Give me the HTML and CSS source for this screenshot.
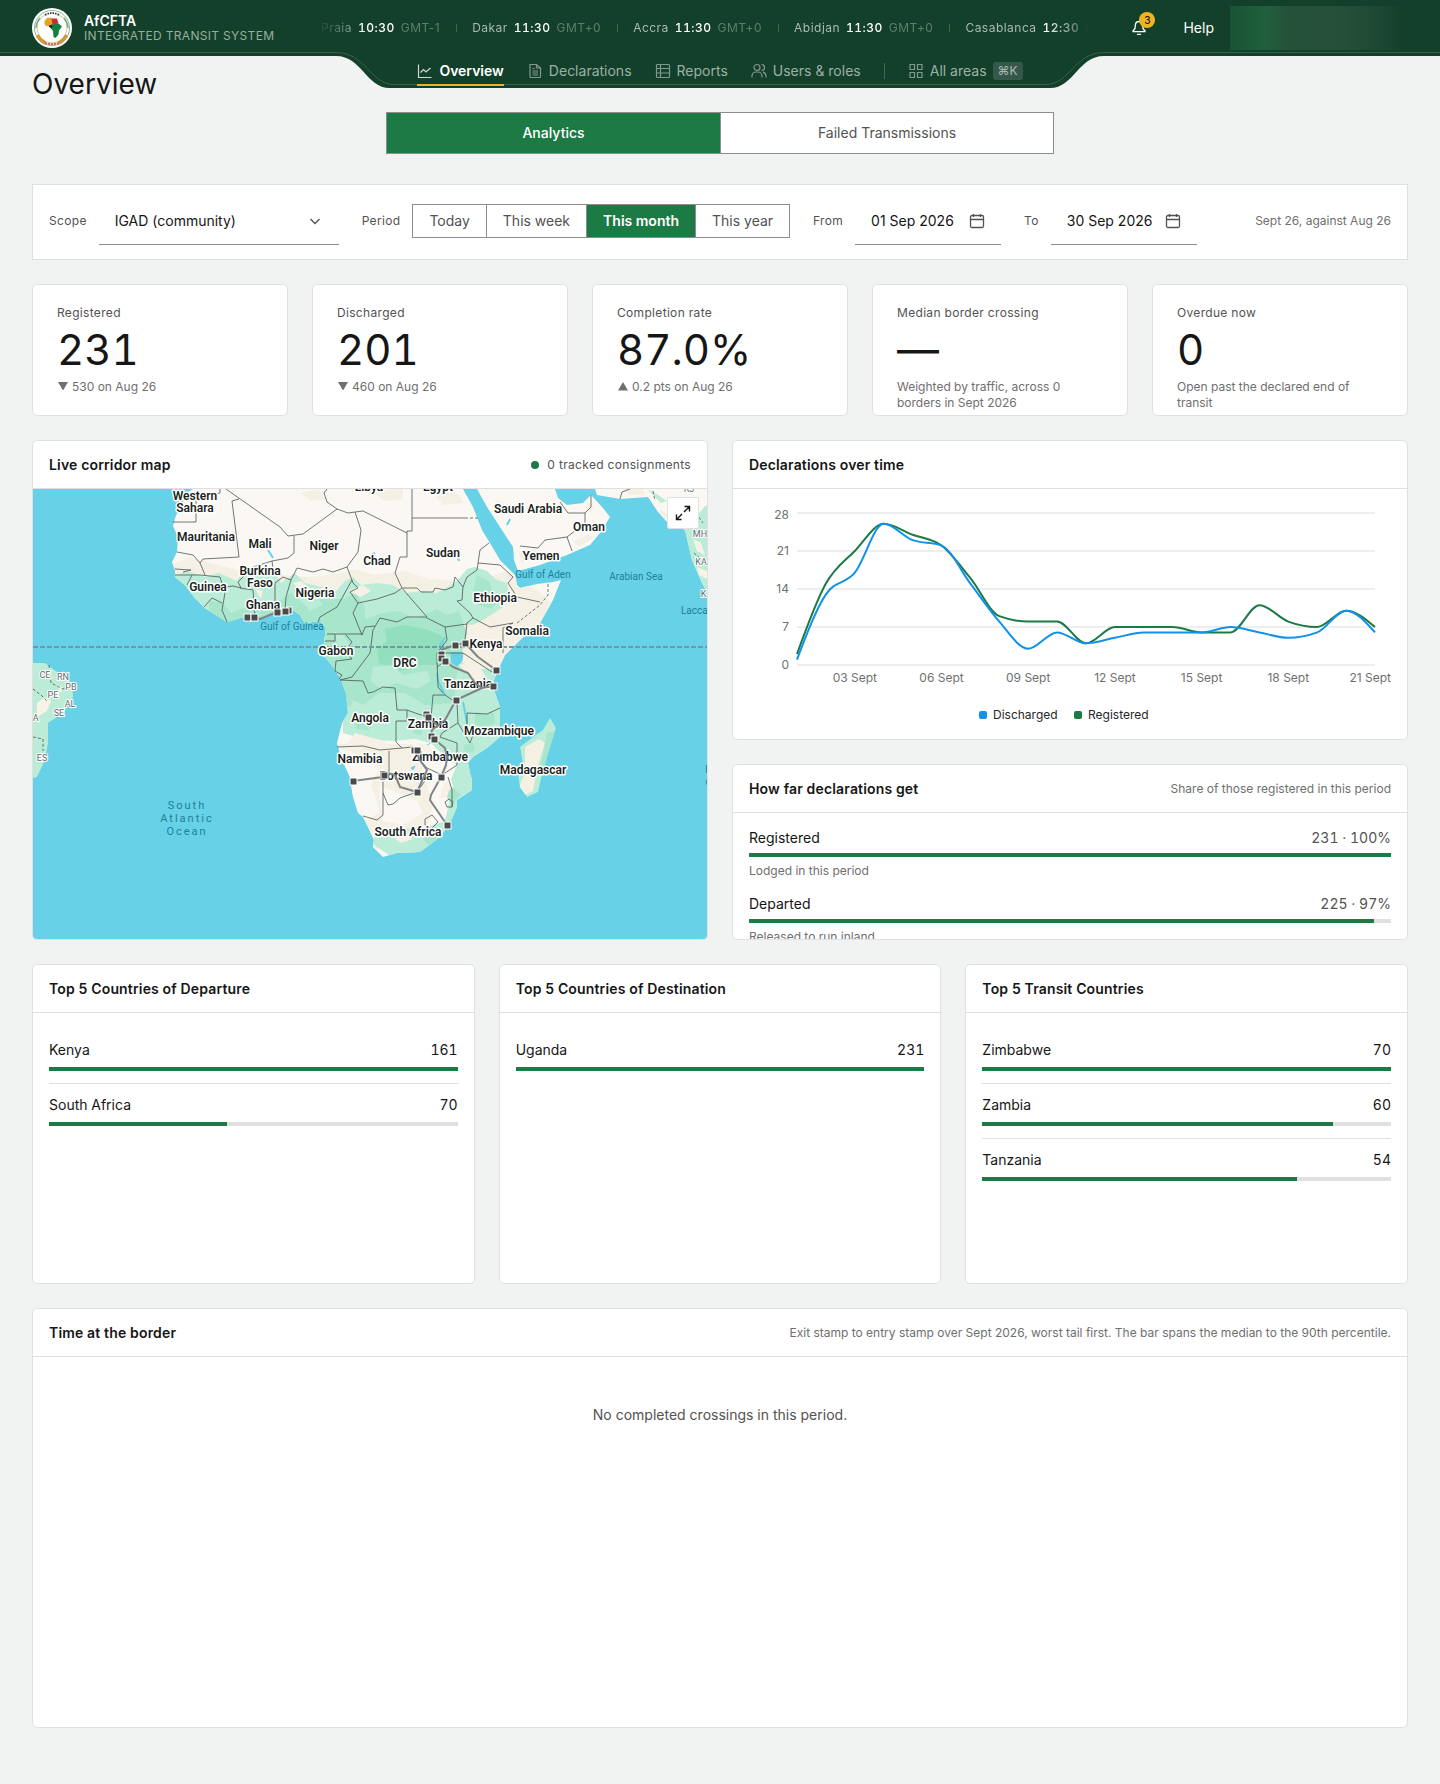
FILE: index.html
```html
<!DOCTYPE html>
<html lang="en">
<head>
<meta charset="utf-8">
<meta name="viewport" content="width=device-width, initial-scale=1">
<title>Overview – AfCFTA Integrated Transit System</title>
<link rel="stylesheet" href="styles.css">
</head>
<body>
<header class="topbar">
  <a class="brand" href="#">
    <svg class="brand-logo" viewBox="0 0 40 40" aria-hidden="true">
      <circle cx="20" cy="20" r="20" fill="#fff"/>
      <circle cx="20" cy="20" r="17.500" fill="none" stroke="#7fb69a" stroke-width="1"/>
      <circle cx="20" cy="20" r="15" fill="none" stroke="#d9c48f" stroke-width="1"/>
      <path d="M5.500 27a16 16 0 0 0 8 8M34.500 27a16 16 0 0 1-8 8" fill="none" stroke="#cf9a35" stroke-width="3.500"/>
      <path d="M4 20a16 16 0 0 1 4-10M36 20a16 16 0 0 0-4-10" fill="none" stroke="#5aa77e" stroke-width="1.200"/>
      <path d="M13 7.500q7-4 14 0" fill="none" stroke="#fff" stroke-width="5"/>
      <path d="M13 7q7-4 14 0" fill="none" stroke="#444" stroke-width="2" stroke-dasharray="1.600 1"/>
      <path d="M13 35q7 2 14 0" fill="none" stroke="#e2604e" stroke-width="2" stroke-dasharray="2 1"/>
      <path d="M12.500 13l2.500-3 4-.5 1 6-2 3-4-.5-1.500-2z" fill="#e0a526"/>
      <path d="M19 10.500l6 0 1.500 5-6 1z" fill="#d12c2c"/>
      <path d="M16.500 18l4-2 1 4-2 1z" fill="#222"/>
      <path d="M21 16l5.500-.5 3.500 3-3 4-.5 4-3 3.500-2-1-.5-6-1.500-2z" fill="#12813f"/>
    </svg>
    <span class="brand-text">
      <strong class="brand-name">AfCFTA</strong>
      <span class="brand-sub">INTEGRATED TRANSIT SYSTEM</span>
    </span>
  </a>
  <div class="ticker" aria-label="World clocks">
    <span class="clock">Praia <b>10:30</b> <i>GMT-1</i></span>
    <span class="clock">Dakar <b>11:30</b> <i>GMT+0</i></span>
    <span class="clock">Accra <b>11:30</b> <i>GMT+0</i></span>
    <span class="clock">Abidjan <b>11:30</b> <i>GMT+0</i></span>
    <span class="clock">Casablanca <b>12:30</b> <i>GMT+1</i></span>
  </div>
  <div class="topbar-actions">
    <button class="bell" type="button" aria-label="Notifications, 3 unread">
      <svg viewBox="0 0 16 16" width="16" height="16" fill="none" stroke="currentColor" stroke-width="1.300" stroke-linejoin="round" stroke-linecap="round"><path d="M8 1.500C5.800 1.500 4.500 3.200 4.300 5.200L4 8.500 2 11v.7h12V11l-2-2.500-.3-3.300C11.500 3.200 10.200 1.500 8 1.500z"/><path d="M6.500 14.300h3"/></svg>
      <span class="badge">3</span>
    </button>
    <a class="help" href="#">Help</a>
    <button class="account" type="button" aria-label="Account"></button>
  </div>
  <div class="notch">
    <svg class="notch-shape" viewBox="0 0 768 36" preserveAspectRatio="none" aria-hidden="true">
      <path d="M0 0V4C26 4 30 36 54 36H714C738 36 742 4 768 4V0z" fill="#13402a"/>
      <path d="M0 .5C30 .5 34 32.500 58 32.500H710C734 32.500 738 .5 768 .5" fill="none" stroke="#3a5f4b"/>
    </svg>
    <nav class="nav" aria-label="Main">
      <a class="nav-link is-active" href="#" aria-current="page"><svg viewBox="0 0 16 16"><path d="M1.500 1.500v13h13M3.500 9.500l3-3 2.500 2.500 4.500-4"/></svg>Overview</a>
      <a class="nav-link" href="#"><svg viewBox="0 0 16 16"><path d="M3 1.500h6.500L13.500 5v8.500a1 1 0 0 1-1 1h-8.500a1 1 0 0 1-1-1zM9.500 1.500V5h4M5.500 8h5.500M5.500 10h5.500M5.500 12h5.500M5.500 5.500h2"/></svg>Declarations</a>
      <a class="nav-link" href="#"><svg viewBox="0 0 16 16"><path d="M2.500 1.500h11a1 1 0 0 1 1 1v11a1 1 0 0 1-1 1h-11a1 1 0 0 1-1-1v-11a1 1 0 0 1 1-1zM1.500 5.500h13M5.500 1.500v13M1.500 10h13"/></svg>Reports</a>
      <a class="nav-link" href="#"><svg viewBox="0 0 16 16"><circle cx="6" cy="4.500" r="3"/><path d="M1 14.500V13a4 4 0 0 1 4-4h2a4 4 0 0 1 4 4v1.500M10.500 1.500a3 3 0 0 1 0 6M12 9.200a4 4 0 0 1 3 3.800v1.500"/></svg>Users &amp; roles</a>
      <span class="nav-rule"></span>
      <button class="nav-link" type="button"><svg viewBox="0 0 16 16"><path d="M2 1.500h4.500V6.500H2zM9.500 1.500H14V6.500H9.500zM2 9.500h4.500v5H2zM9.500 9.500H14v5H9.500z"/></svg>All areas <kbd>⌘K</kbd></button>
    </nav>
  </div>
</header>

<main class="page">
  <h1 class="page-title">Overview</h1>
  <div class="view-tabs" role="tablist">
    <button class="view-tab is-active" type="button" role="tab" aria-selected="true">Analytics</button>
    <button class="view-tab" type="button" role="tab" aria-selected="false">Failed Transmissions</button>
  </div>

  <form class="filters">
    <div class="filter">
      <label for="scope">Scope</label>
      <div class="field field-select">
        <select id="scope"><option>IGAD (community)</option></select>
        <svg class="chevron" viewBox="0 0 16 16" width="16" height="16"><path d="M3.500 6L8 10.500 12.500 6" fill="none" stroke="#525252" stroke-width="1.400"/></svg>
      </div>
    </div>
    <div class="filter">
      <span id="period-label">Period</span>
      <div class="segments" role="group" aria-labelledby="period-label">
        <button type="button">Today</button>
        <button type="button">This week</button>
        <button type="button" class="is-active" aria-pressed="true">This month</button>
        <button type="button">This year</button>
      </div>
    </div>
    <div class="filter">
      <label for="from">From</label>
      <div class="field"><input id="from" type="text" value="01 Sep 2026">
        <svg viewBox="0 0 16 16" width="16" height="16" fill="none" stroke="#525252" stroke-width="1.300"><rect x="1.500" y="2.500" width="13" height="12" rx="1.500"/><path d="M1.500 6.500h13M4.500 1v3M11.500 1v3"/></svg></div>
    </div>
    <div class="filter">
      <label for="to">To</label>
      <div class="field"><input id="to" type="text" value="30 Sep 2026">
        <svg viewBox="0 0 16 16" width="16" height="16" fill="none" stroke="#525252" stroke-width="1.300"><rect x="1.500" y="2.500" width="13" height="12" rx="1.500"/><path d="M1.500 6.500h13M4.500 1v3M11.500 1v3"/></svg></div>
    </div>
    <p class="filters-note">Sept 26, against Aug 26</p>
  </form>

  <section class="kpis" aria-label="Key figures">
    <article class="card kpi"><h2>Registered</h2><p class="kpi-value">231</p><p class="kpi-note"><svg viewBox="0 0 10 10"><path d="M0 1h10L5 9.500z"/></svg>530 on Aug 26</p></article>
    <article class="card kpi"><h2>Discharged</h2><p class="kpi-value">201</p><p class="kpi-note"><svg viewBox="0 0 10 10"><path d="M0 1h10L5 9.500z"/></svg>460 on Aug 26</p></article>
    <article class="card kpi"><h2>Completion rate</h2><p class="kpi-value">87.0%</p><p class="kpi-note"><svg viewBox="0 0 10 10"><path d="M0 9.500h10L5 1z"/></svg>0.2 pts on Aug 26</p></article>
    <article class="card kpi"><h2>Median border crossing</h2><p class="kpi-value">—</p><p class="kpi-note">Weighted by traffic, across 0 borders in Sept 2026</p></article>
    <article class="card kpi"><h2>Overdue now</h2><p class="kpi-value">0</p><p class="kpi-note">Open past the declared end of transit</p></article>
  </section>

  <section class="middle">
    <article class="card map-card">
      <header class="card-head"><h2>Live corridor map</h2><p class="tracked">0 tracked consignments</p></header>
      <div class="map">
        <svg class="map-svg" viewBox="0 0 674 450" preserveAspectRatio="xMidYMid slice" role="img" aria-label="Corridor map of Africa">
          <defs>
            <path id="africa" d="M160 0L155 3 148 16 142 29 140 37 145 48 144 63 139 73 142 81 142 88 152 96 161 108 172 119 183 126 194 133 210 128 227 130 244 124 260 121 267 126 272 134 287 132 293 139 291 154 289 164 300 178 308 191 313 204 315 224 309 234 304 254 309 271 317 288 320 308 325 324 330 328 335 338 341 351 340 358 350 368 364 364 387 363 407 348 417 334 424 318 424 311 439 301 439 291 437 284 435 274 440 268 454 259 467 248 467 218 462 204 460 194 464 183 472 166 487 151 507 134 520 111 528 91 520 93 504 95 487 99 484 96 482 86 467 71 457 54 449 41 440 18 430 0z"/>
            <path id="madagascar" d="M517 229L523 239 519 251 510 281 505 303 494 308 487 298 485 284 490 274 487 258 500 248 510 241z"/>
            <clipPath id="africa-clip"><use href="#africa"/></clipPath>
            <clipPath id="madagascar-clip"><use href="#madagascar"/></clipPath>
          </defs>
          <rect width="674" height="450" fill="#67d1e7"/>
          <use href="#africa" fill="#fbf8f4"/>
          <g clip-path="url(#africa-clip)">
            <path fill="#f5f0e4" d="M138 76l20-8 20 6 30 8 20-4 20 8 30 2 30-4 14-4 20 6 30-4 24 8 30 2 20-4 16-2 14-4 10 10 20 10 20 20-30 40-40 20H330l-190-40zM300 255h80l20 60-8 30-50 16-16-24 20-18-8-24 8-16-20-10zM268 4l18-4 6 10-14 2zM400 4l24 0 8 10-22 2zM340 4l30-6v12l-18 2z"/>
            <path fill="#fbf8f4" d="M346 296l24 10 14 6 6 12-20 12-20-4zM306 262l12 0 18 30 10 32-12 6-18-30z"/>
            <path fill="#bbecd7" d="M138 88l16-6 18 6 14-4 18 8 8-14 14 8 14-4 8 12 14-10 10 10 16 4 12 8 12-14 8-4 8 8 16-2 16 2 14 8 16-2 14 2 14-8 6-4 10-12 8-2 12 4 8 8 12 4 2 14-6 10-18 12-12 6-10-2-4 18-4 14 8 8 14 6 8 0 20 0V280l-30 30 2 30-22 30-60 0-30-20 16-2 16-8 30-2 18-6 4-18 6-10-4-14 6-14-12-8-14-14-16-4-24 2-28-2-20-6V190L260 160 190 136z"/>
            <path fill="#a7e6cb" d="M176 112l14 2 8 10 20-8 20 2 20-14 14 12 14-6 24 0 12-6 10 14 0 12 18-6 16-2 16 8 22-10 10 6 12-4 8 22-8 30-4 20 0 20-30 2-20-12-26 0-16 12-22-10-16-30 0-14-20-6-20-6-20 2-30 6-26-10z"/>
            <path fill="#92dfbe" d="M352 140l20-4 20 4 16 6 4 10-8 20-16 0-20 6-22-8-2-14 10-8z"/>
            <path fill="#bbecd7" d="M340 178l20-2 10 10 24-4 4 10-14 8-20-6-16 6-10-8zM300 142l10 4 8 12-10 6zM380 120l8 4-6 4zM336 112l20-6 8 4-14 8zM270 112l14-4 6 8-14 6z"/>
            <path fill="#a7e6cb" d="M444 86l12 6 4 12 8 6-10 10-12-4-6-14zM320 226l14 4 2 12-12-2zM380 232l12 4-4 10-8-2zM442 222l10 4 8-4 2 12-12 6-8-6zM430 256l10-2 2 8-10 2zM412 304l8-6 8 8-10 10zM390 350l14-10 6 6-14 12zM300 200l12 4 8 10-6 6z"/>
            <path fill="#f6f0e5" d="M436 136l14 0 20 6 2 14-8 18-10-4-8-8-10-8zM426 176l8-2 14 6 6 10-10 2-8-6zM322 244l14 4 16 4 8 8-50 0zM384 254l12 2 8 12-8 4-10-8zM412 292l6 4-4 12-8 2zM260 94l8-2 10 8-6 6zM222 100l8 2-2 8zM358 346l14-2 8 6-12 4zM316 102l14-6 8 6-10 6z"/>
          </g>
          <path fill="#fbf8f4" d="M444 0L454 18 467 38 480 58 481 71 485 82 507 76 534 66 557 56 567 44 577 28 570 19 558 6 550 14 534 16 525 9 522 0zM562 0l2 6 23 4 28-2 10 15 9 10 18 8 7 30 10 23 5 9V0z"/>
          <path fill="#f5f0e4" d="M486 62l16-2 6 8-20 6zM540 52l14-6 8 2-16 10zM462 10l8 4 2 10-8-6zM590 0l20 0 2 6-16 0zM626 20l10 6-4 4zM555 12l5 6-2 6-5-4zM486 102l10 2 8 14-14 12-6 0z"/>
          <path fill="#bbecd7" d="M652 41l20-24 2 0V103l-5-9-10-23zM614 0l8 4 12 8-6 2z"/>
          <path fill="#f7f3e6" d="M660 50l8 4 4 12-8-4zM664 78l10 4v8l-8-4zM658 8l8 2-4 6z"/>
          <path fill="#bbecd7" d="M0 174H12L24 183 39 194 40 208 30 224 15 234 15 254 12 271 4 288 0 289z"/>
          <path fill="#f7f3e6" d="M4 214l8-6 6 4-4 10-10 6zM24 196l6 2-2 6z"/>
          <use href="#madagascar" fill="#bbecd7"/>
          <g clip-path="url(#madagascar-clip)"><path fill="#f4f1e2" d="M492 258l14-8 6 4-8 26-4 22-8 4-6-8 6-14z"/><path fill="#a7e6cb" d="M514 244l8-2-8 34-4 10-3-6z"/></g>
          <g class="waters">
            <path d="M404 184l1 8 4 8 3 6M430 213l2 10 2 11M412 148l-6 10M342 64l-4 2M235 61l5 8M457 33l-4 6M424 64l2 8M474 36l3-6"/>
            <path d="M418 164h12l-1 8-5 5-5-3zM378 279l4-2-2 4zM394 256l8-4" class="lake"/>
          </g>
          <g class="borders">
            <path d="M187 0V4L163 10V33H140M206 10L199 12 206 68 170 70 167 74 160 66 144 63M193 0L247 38 255 47 270 45 304 20 294 13 291 4 294 0M261 47V64L255 69 239 72 220 78 208 90 205 93 208 99 200 97 192 98M304 20L315 24 322 23 330 22 374 44M379 0V42H374V68H367L362 84 369 99M379 29H432M322 23L328 41 325 63 314 78 320 94 325 99M258 91L264 79 280 83 290 80 300 83 314 78M319 91L304 118 287 128 285 133M252 121L253 108 258 91M242 121V94L250 88 258 91M239 72L240 80 249 87M222 128L220 101 207 99"/>
            <path d="M194 133L189 121 192 104 187 88 167 86 142 86M167 74L172 86M171 118L179 109 189 114M154 96L159 86M142 80L158 81 150 83M325 99L317 103 325 114 344 110 362 104 369 99M325 114L320 124 329 146M294 145H329M329 146L332 138 342 137M347 129L340 141 337 164 319 188 307 191M347 129L364 133 374 128 392 128 412 138M369 99L380 112 394 128M370 99L384 99 388 103 400 103 402 99 412 101 420 98 422 88 430 98 429 111 424 112 437 124 440 129 457 138 480 134M430 98L434 88 444 81 447 61 456 54M445 74L467 76 480 88 475 94 484 108 507 113M480 134L470 139V164M432 151L434 134 440 129M412 138L434 135M412 138L414 151 404 164 404 171 405 198 410 204M412 164H430L459 183M404 178L412 172"/>
            <path d="M292 152H302V145M313 146L319 153 312 162 319 170 303 172 302 182 309 186 306 190M307 191L330 192 335 204 340 203 350 198 362 199 364 221H374V232H363V253L369 259M374 221L385 225 398 229 400 206 412 206 424 214 425 234 409 244 407 248 424 254V276L409 286 394 279 380 263M304 258L330 257 347 261 380 258M356 262V283L350 284V326L344 331 330 327M350 304L355 316 360 315 367 309 384 303 394 289 400 286M434 224L454 225 467 219M425 234L437 254 440 246 434 238 434 224M415 288L419 301 419 318M416 310l4 3-1 5-5 0-2-5zM392 330l7-4 6 7-7 7-6-4zM487 57L505 59 512 51 534 48 552 34V24H535L527 13M534 48L539 62M558 6V18L552 24M587 10L589 3 597 0"/>
            <path d="M432 29H447M484 134L507 116 515 106V94M620 2L622 12M0 200L8 206 14 212M16 176L18 194 30 200 40 198M0 248L10 250 10 262M660 20L670 34M661 64L668 70" stroke-dasharray="3 2"/>
          </g>
          <path d="M0 158H674" stroke="#7497a5" stroke-width="2" stroke-dasharray="5 2"/>
          <g class="place">
            <text x="162" y="11">Western</text><text x="162" y="23">Sahara</text><text x="173" y="52">Mauritania</text><text x="227" y="59">Mali</text><text x="291" y="61">Niger</text><text x="336" y="2">Libya</text><text x="405" y="2">Egypt</text><text x="495" y="24">Saudi Arabia</text><text x="556" y="42">Oman</text><text x="508" y="71">Yemen</text><text x="410" y="68">Sudan</text><text x="344" y="76">Chad</text><text x="462" y="113">Ethiopia</text><text x="494" y="146">Somalia</text><text x="453" y="159">Kenya</text><text x="435" y="199">Tanzania</text><text x="372" y="178">DRC</text><text x="303" y="166">Gabon</text><text x="337" y="233">Angola</text><text x="395" y="239">Zambia</text><text x="466" y="246">Mozambique</text><text x="407" y="272">Zimbabwe</text><text x="373" y="291">Botswana</text><text x="327" y="274">Namibia</text><text x="500" y="285">Madagascar</text><text x="375" y="347">South Africa</text><text x="175" y="102">Guinea</text><text x="227" y="86">Burkina</text><text x="227" y="98">Faso</text><text x="230" y="120">Ghana</text><text x="282" y="108">Nigeria</text>
          </g>
          <g class="sea">
            <text x="259" y="141">Gulf of Guinea</text><text x="510" y="89">Gulf of Aden</text><text x="603" y="91">Arabian Sea</text><text x="680" y="125">Laccadive Sea</text>
          </g>
          <g class="ocean"><text x="154" y="320">South</text><text x="154" y="333">Atlantic</text><text x="154" y="346">Ocean</text><text x="693" y="284">Indian</text><text x="693" y="297">Ocean</text></g>
          <g class="state">
            <text x="12" y="189">CE</text><text x="30" y="191">RN</text><text x="38" y="201">PB</text><text x="20" y="209">PE</text><text x="37" y="218">AL</text><text x="26" y="227">SE</text><text x="0" y="232">BA</text><text x="9" y="272">ES</text><text x="656" y="3">RJ</text><text x="667" y="48">MH</text><text x="668" y="76">KA</text><text x="673" y="108">KL</text>
          </g>
          <path class="routes" d="M221 128L227 130 244 123 257 121M422 156L432 154 445 168 463 181M408 161L422 156M412 172L420 178 435 184 442 194 449 199 460 197M423 211L449 199M423 211L412 231 399 241 398 247 401 250 412 259 414 268 413 276 408 288 398 306 397 311 414 336M395 228L404 236M320 292L350 288 355 284 362 286 367 298 384 303 394 281 386 270 384 261"/>
          <g class="stops">
            <rect x="211" y="125" width="7" height="7"/><rect x="218" y="125" width="7" height="7"/><rect x="254" y="118" width="5" height="7"/><rect x="249" y="119" width="7" height="7"/><rect x="241" y="120" width="7" height="7"/><rect x="419" y="153" width="7" height="7"/><rect x="429" y="151" width="7" height="7"/><rect x="460" y="178" width="7" height="7"/><rect x="457" y="194" width="7" height="7"/><rect x="405" y="162" width="7" height="7"/><rect x="405" y="166" width="7" height="7"/><rect x="409" y="169" width="7" height="7"/><rect x="420" y="208" width="7" height="7"/><rect x="390" y="222" width="7" height="7"/><rect x="392" y="225" width="7" height="7"/><rect x="395" y="244" width="7" height="7"/><rect x="398" y="247" width="7" height="7"/><rect x="378" y="258" width="7" height="7"/><rect x="381" y="258" width="7" height="7"/><rect x="405" y="285" width="7" height="7"/><rect x="381" y="300" width="7" height="7"/><rect x="317" y="289" width="7" height="7"/><rect x="348" y="283" width="7" height="7"/><rect x="411" y="333" width="7" height="7"/>
          </g>
        </svg>
        <button class="map-expand" type="button" aria-label="Expand map"><svg viewBox="0 0 16 16" width="16" height="16"><path d="M9.500 1.500h5v5M6.500 14.500h-5v-5M14.500 1.500L9 7M1.500 14.500L7 9" fill="none" stroke="#161616" stroke-width="1.400"/></svg></button>
      </div>
    </article>

    <article class="card">
      <header class="card-head"><h2>Declarations over time</h2></header>
      <svg class="chart" id="chart" viewBox="0 0 674 250" role="img" aria-label="Discharged and registered declarations per day"></svg>
    </article>

    <article class="card funnel-card">
      <header class="card-head"><h2>How far declarations get</h2><p>Share of those registered in this period</p></header>
      <ul class="funnel">
        <li><div class="row"><span>Registered</span><span class="share">231 · 100%</span></div><div class="bar"><div style="width:100%"></div></div><p>Lodged in this period</p></li>
        <li><div class="row"><span>Departed</span><span class="share">225 · 97%</span></div><div class="bar"><div style="width:97.4%"></div></div><p>Released to run inland</p></li>
      </ul>
    </article>
  </section>

  <section class="rankings">
    <article class="card ranking">
      <header class="card-head"><h2>Top 5 Countries of Departure</h2></header>
      <ul class="rank-list">
        <li><div class="row"><span>Kenya</span><span>161</span></div><div class="bar"><div style="width:100%"></div></div></li>
        <li><div class="row"><span>South Africa</span><span>70</span></div><div class="bar"><div style="width:43.5%"></div></div></li>
      </ul>
    </article>
    <article class="card ranking">
      <header class="card-head"><h2>Top 5 Countries of Destination</h2></header>
      <ul class="rank-list">
        <li><div class="row"><span>Uganda</span><span>231</span></div><div class="bar"><div style="width:100%"></div></div></li>
      </ul>
    </article>
    <article class="card ranking">
      <header class="card-head"><h2>Top 5 Transit Countries</h2></header>
      <ul class="rank-list">
        <li><div class="row"><span>Zimbabwe</span><span>70</span></div><div class="bar"><div style="width:100%"></div></div></li>
        <li><div class="row"><span>Zambia</span><span>60</span></div><div class="bar"><div style="width:85.7%"></div></div></li>
        <li><div class="row"><span>Tanzania</span><span>54</span></div><div class="bar"><div style="width:77.1%"></div></div></li>
      </ul>
    </article>
  </section>

  <section class="card border-time">
    <header class="card-head"><h2>Time at the border</h2><p>Exit stamp to entry stamp over Sept 2026, worst tail first. The bar spans the median to the 90th percentile.</p></header>
    <p class="empty">No completed crossings in this period.</p>
  </section>
</main>
<script src="chart.js"></script>
</body>
</html>
```

FILE: styles.css
```css
*, *::before, *::after { box-sizing: border-box; }

:root {
  --green: #1c7a45;
  --forest: #13402a;
  --ink: #161616;
  --ink-2: #525252;
  --ink-3: #6f6f6f;
  --line: #e0e0e0;
  --line-strong: #8d8d8d;
  --page: #f1f3f2;
}

body {
  margin: 0;
  background: var(--page);
  color: var(--ink);
  font: 14px/18px Inter, "Liberation Sans", sans-serif;
}

h1, h2, p, ul { margin: 0; padding: 0; }
ul { list-style: none; }
a { color: inherit; text-decoration: none; }
button, input, select { font: inherit; color: inherit; border: 0; background: none; padding: 0; margin: 0; }

/* Top bar */
.topbar {
  position: relative;
  display: flex;
  align-items: center;
  height: 56px;
  padding: 0 32px;
  background: var(--forest);
  color: #fff;
}
.topbar::after {
  content: "";
  position: absolute;
  inset: 52px 0 auto;
  height: 1px;
  background: #3a5f4b;
}
.brand { display: flex; align-items: center; gap: 12px; width: 284px; }
.brand-logo { width: 40px; height: 40px; flex: none; }
.brand-text { display: flex; flex-direction: column; }
.brand-name { font-weight: 600; line-height: 16px; }
.brand-sub { font-size: 12px; line-height: 14px; letter-spacing: 0.32px; color: #9aae9f; white-space: nowrap; }

.ticker {
  display: flex;
  flex: 1;
  height: 52px;
  align-items: center;
  overflow: hidden;
  font-size: 12px;
  letter-spacing: 0.48px;
  color: #a9bab0;
  -webkit-mask-image: linear-gradient(90deg, transparent, #000 48px, #000 calc(100% - 48px), transparent);
  mask-image: linear-gradient(90deg, transparent, #000 48px, #000 calc(100% - 48px), transparent);
}
.clock { display: flex; gap: 6px; flex: none; padding: 0 16px; position: relative; }
.clock:first-child { padding-left: 5px; }
.clock + .clock::before { content: ""; position: absolute; left: 0; top: 5px; width: 1px; height: 8px; background: #42654f; }
.clock b { font-weight: 500; color: #fff; font-variant-numeric: tabular-nums; }
.clock i { font-style: normal; color: #5f7d6c; }

.topbar-actions { display: flex; align-items: center; margin-left: 38px; height: 56px; }
.bell { position: relative; display: flex; width: 16px; height: 16px; color: #fff; }
.badge {
  position: absolute; left: 8px; top: -8px;
  width: 16px; height: 16px; border-radius: 8px;
  background: #f0b323; color: #161616; font-size: 10px; font-weight: 500; line-height: 16px; text-align: center;
}
.help { margin-left: 36px; }
.account {
  width: 174px; height: 44px; margin: 0 4px 0 16px;
  background: linear-gradient(90deg, #195434, #205f3c 20%, #25503a 36%, #27503b 60%, #214a36 80%, var(--forest));
}

.notch { position: absolute; top: 52px; left: calc(50% - 384px); width: 768px; height: 36px; z-index: 2; }
.notch-shape { position: absolute; inset: 0; width: 100%; height: 100%; }
.nav { position: relative; display: flex; align-items: center; justify-content: center; gap: 23px; height: 34px; color: #9db0a4; }
.nav-link { display: flex; align-items: center; gap: 6px; height: 34px; padding-top: 6px; border-bottom: 2px solid transparent; white-space: nowrap; }
.nav-link svg { width: 16px; height: 16px; fill: none; stroke: currentColor; stroke-width: 1.2; opacity: 0.8; }
.nav-link.is-active { color: #fff; font-weight: 600; border-bottom-color: #f0b323; }
.nav-rule { width: 1px; height: 16px; margin-top: 4px; background: #42654f; }
kbd { font: inherit; font-size: 12px; line-height: 18px; padding: 0 5px; border-radius: 3px; background: #36584a; color: #a9bab0; }

/* Page */
.page { display: flex; flex-direction: column; padding: 8px 32px 56px; }
.page-title { font-size: 28px; font-weight: 400; line-height: 40px; }
.view-tabs {
  display: grid; grid-template-columns: 1fr 1fr; align-self: center;
  width: 668px; max-width: 100%; height: 42px; margin-top: 8px;
  border: 1px solid var(--line-strong); background: #fff;
}
.view-tab { color: var(--ink-2); }
.view-tab + .view-tab { border-left: 1px solid var(--line-strong); }
.view-tab.is-active { background: var(--green); color: #fff; font-weight: 500; }

.filters {
  display: flex; align-items: center; gap: 23px;
  min-height: 76px; margin-top: 30px; padding: 0 16px 2px;
  border: 1px solid var(--line); background: #fff;
}
.filter { display: flex; align-items: center; gap: 12px; font-size: 12px; letter-spacing: 0.32px; color: var(--ink-2); }
.field {
  display: flex; align-items: center; gap: 12px; height: 48px; padding: 0 16px;
  border-bottom: 1px solid var(--line-strong);
  font-size: 14px; letter-spacing: 0; color: var(--ink);
}
.field input { width: 86px; field-sizing: content; }
.field-select { width: 240px; }
.field-select select { flex: 1; min-width: 0; appearance: none; }
.segments { display: flex; height: 34px; border: 1px solid var(--line-strong); font-size: 14px; letter-spacing: 0; }
.segments button { padding: 0 16px; white-space: nowrap; }
.segments button + button { border-left: 1px solid var(--line-strong); }
.segments .is-active { background: var(--green); color: #fff; font-weight: 600; }
.filters-note { margin-left: auto; font-size: 12px; color: var(--ink-3); }

.card { background: #fff; border: 1px solid var(--line); border-radius: 5px; overflow: hidden; }
.card-head {
  display: flex; align-items: center; justify-content: space-between; gap: 16px;
  height: 48px; padding: 0 16px; border-bottom: 1px solid var(--line);
}
.card-head h2 { font-size: 14px; font-weight: 600; letter-spacing: 0.16px; }
.card-head p { font-size: 12px; color: var(--ink-3); }

.kpis { display: grid; grid-template-columns: repeat(5, 1fr); gap: 24px; margin-top: 24px; }
.kpi { height: 132px; padding: 20px 24px 0; }
.kpi h2 { font-size: 12px; font-weight: 400; line-height: 16px; letter-spacing: 0.32px; color: var(--ink-2); }
.kpi-value { font-size: 42px; line-height: 50px; margin: 4px 0; font-variant-numeric: tabular-nums; }
.kpi-note { font-size: 12px; line-height: 16px; color: var(--ink-3); }
.kpi-note svg { width: 10px; height: 10px; margin: 0 4px 0 1px; fill: #6f6f6f; }

.middle { display: grid; grid-template-columns: repeat(2, minmax(0, 1fr)); grid-template-rows: 300px 176px; gap: 24px; margin-top: 24px; }
.map-card { grid-row: span 2; display: flex; flex-direction: column; }
.map-card .card-head { flex: none; }
.card-head .tracked { display: flex; align-items: center; gap: 8px; letter-spacing: 0.32px; color: var(--ink-2); }
.tracked::before { content: ""; width: 8px; height: 8px; border-radius: 4px; background: var(--green); }
.map { position: relative; flex: 1; min-height: 0; }
.map-svg { display: block; width: 100%; height: 100%; }
.map-svg text { font-family: Roboto, "Liberation Sans", sans-serif; text-anchor: middle; }
.borders { fill: none; stroke: #4d5654; stroke-width: 0.8; stroke-linejoin: round; }
.waters { fill: none; stroke: #67d1e7; stroke-width: 2; }
.waters .lake { fill: #67d1e7; stroke-width: 1; }
.place { font-size: 12px; font-weight: 600; fill: #1c1f22; stroke: #fff; stroke-width: 3px; stroke-linejoin: round; paint-order: stroke; }
.sea { font-size: 10px; fill: #1d8199; }
.ocean { font-size: 11px; letter-spacing: 2px; fill: #1d8199; }
.state { font-size: 9px; fill: #5f6b6d; stroke: #fff; stroke-width: 2px; paint-order: stroke; }
.routes { fill: none; stroke: #7f8487; stroke-width: 2; stroke-linejoin: round; }
.stops { fill: #4a4a4a; stroke: #fff; stroke-width: 1; }
.map-expand {
  position: absolute; top: 8px; right: 8px; width: 32px; height: 32px;
  display: flex; align-items: center; justify-content: center;
  background: #fff; border: 1px solid var(--line); border-radius: 2px;
}

.chart { display: block; width: 100%; height: auto; font-size: 12px; fill: var(--ink-3); }
.chart .grid { stroke: #eee; stroke-width: 2; }
.chart .series { fill: none; stroke-width: 2; }
.chart .legend { fill: #262626; }

.funnel { display: flex; flex-direction: column; gap: 16px; padding: 16px; }
.funnel p { margin-top: 6px; font-size: 12px; line-height: 16px; color: var(--ink-3); }
.funnel .bar { margin-top: 6px; }
.share { color: var(--ink-2); }
.row { display: flex; justify-content: space-between; font-variant-numeric: tabular-nums; }
.bar { height: 4px; background: var(--line); }
.bar div { height: 4px; background: var(--green); }

.rankings { display: grid; grid-template-columns: repeat(3, 1fr); gap: 24px; margin-top: 24px; }
.ranking { min-height: 320px; }
.rank-list { padding: 16px; }
.rank-list li { padding: 12px 0; border-bottom: 1px solid var(--line); }
.rank-list li:last-child { border-bottom: 0; }
.rank-list .bar { margin-top: 8px; }

.border-time { min-height: 420px; margin-top: 24px; }
.empty { padding: 49px 16px; text-align: center; color: var(--ink-2); }
```

FILE: chart.js
```js
(function () {
  // Daily declarations, 1 to 21 September
  const series = [
    { color: '#1c7a45', data: [2, 15, 21, 26, 24, 22, 16, 9, 8, 8, 4, 7, 7, 7, 6, 6, 11, 8, 7, 10, 7] },
    { color: '#1192e8', data: [1, 13, 17, 26, 23, 22, 15, 8, 3, 6, 4, 5, 6, 6, 6, 7, 6, 5, 6, 10, 6] }
  ];
  const x0 = 64, x1 = 642, y0 = 176, y1 = 24, max = 28;
  const px = i => x0 + i * (x1 - x0) / 20;
  const py = v => y0 - v * (y0 - y1) / max;

  // Monotone cubic curve through the points
  function curve(data) {
    const pts = data.map((v, i) => [px(i), py(v)]);
    const h = pts[1][0] - pts[0][0];
    const s = pts.slice(1).map((p, i) => (p[1] - pts[i][1]) / h);
    const t = pts.map((_, i) => {
      if (i === 0 || i === pts.length - 1) return 0;
      const a = s[i - 1], b = s[i];
      return (Math.sign(a) + Math.sign(b)) * Math.min(Math.abs(a), Math.abs(b), Math.abs(a + b) / 4);
    });
    t[0] = (3 * s[0] - t[1]) / 2;
    t[t.length - 1] = (3 * s[s.length - 1] - t[t.length - 2]) / 2;
    let d = 'M' + pts[0].join(' ');
    for (let i = 1; i < pts.length; i++) {
      const [ax, ay] = pts[i - 1], [bx, by] = pts[i];
      d += `C${ax + h / 3} ${ay + t[i - 1] * h / 3} ${bx - h / 3} ${by - t[i] * h / 3} ${bx} ${by}`;
    }
    return d;
  }

  let out = '';
  for (const v of [0, 7, 14, 21, 28]) {
    const ty = v === max ? py(v) + 6 : py(v) + 4;
    out += `<path class="grid" d="M${x0} ${py(v)}H${x1}"/><text x="56" y="${ty}" text-anchor="end">${v}</text>`;
  }
  for (const day of [3, 6, 9, 12, 15, 18, 21]) {
    const last = day === 21;
    out += `<text x="${last ? 658 : px(day - 1)}" y="193" text-anchor="${last ? 'end' : 'middle'}">${String(day).padStart(2, '0')} Sept</text>`;
  }
  for (const s of series) out += `<path class="series" stroke="${s.color}" d="${curve(s.data)}"/>`;
  out += `<g class="legend"><rect x="246" y="222" width="8" height="8" rx="2" fill="${series[1].color}"/><text x="260" y="230">Discharged</text>
  <rect x="341" y="222" width="8" height="8" rx="2" fill="${series[0].color}"/><text x="355" y="230">Registered</text></g>`;
  document.getElementById('chart').innerHTML = out;
})();
```
